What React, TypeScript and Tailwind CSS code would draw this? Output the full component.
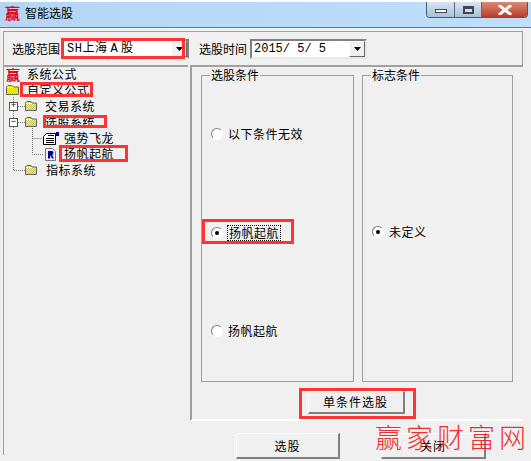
import * as React from "react";

const FONT = "font-['Noto_Sans_CJK_SC','Liberation_Sans',sans-serif]";

function Folder({ wide = false }: { wide?: boolean }) {
  return (
    <svg width={wide ? 13 : 12} height="10" viewBox={wide ? "0 0 13 10" : "0 0 12 10"} className="shrink-0">
      <defs>
        <pattern id="dither" width="2" height="2" patternUnits="userSpaceOnUse">
          <rect width="2" height="2" fill="#ffff00" />
          <rect width="1" height="1" fill="#c8c860" />
          <rect x="1" y="1" width="1" height="1" fill="#c8c860" />
        </pattern>
      </defs>
      <path d={wide ? "M.5 2 L2 .5 H6 L7.5 2 H12.5 V9.5 H.5 Z" : "M.5 2 L2 .5 H6 L7 2 H11.5 V9.5 H.5 Z"} fill="url(#dither)" stroke="#666" />
      <path d="M1 2.5 H7" stroke="#fff" />
    </svg>
  );
}

function DropArrow() {
  return (
    <span className="flex h-[16px] w-[16px] items-center justify-center border-t border-l border-t-white border-l-white border-r border-b border-r-[#666] border-b-[#666] bg-[#f0f0f0]">
      <svg width="7" height="4" viewBox="0 0 7 4">
        <path d="M0 0 H7 L3.5 4 Z" fill="#000" />
      </svg>
    </span>
  );
}

function Radio({ on = false }: { on?: boolean }) {
  return (
    <span className="flex h-[12px] w-[12px] shrink-0 items-center justify-center rounded-full border border-t-[#808080] border-l-[#808080] border-r-white border-b-white bg-white">
      {on && <span className="h-[4px] w-[4px] rounded-full bg-black" />}
    </span>
  );
}

function RaisedButton({ label, className }: { label: string; className: string }) {
  return (
    <button className={`flex items-center justify-center border-t border-l border-t-white border-l-white border-r-2 border-b-2 border-r-[#808080] border-b-[#808080] bg-[#f0f0f0] text-[12px] text-black ${className}`}>
      {label}
    </button>
  );
}

function PlusMinus({ sign }: { sign: string }) {
  return (
    <span className="flex h-[9px] w-[9px] shrink-0 items-center justify-center border border-[#555] bg-white font-['Liberation_Mono',monospace] text-[9px] leading-none">
      {sign}
    </span>
  );
}

function TreeRow({ indent, label, children }: { indent: string; label: string; children: React.ReactNode }) {
  return (
    <div className={`flex h-[16px] items-center ${indent}`}>
      {children}
      <span className="whitespace-nowrap text-[12px] leading-[16px] tracking-[0.5px] text-black">{label}</span>
    </div>
  );
}

function Group({ title, className, children }: { title: string; className: string; children: React.ReactNode }) {
  return (
    <div className={`relative h-[307px] border border-[#a0a0a0] ${className}`}>
      <span className="absolute -top-[9px] left-[8px] bg-[#f0f0f0] px-[1px] text-[12px] leading-[16px] text-black">{title}</span>
      {children}
    </div>
  );
}

export default function App() {
  return (
    <div className={`relative h-[461px] w-[531px] overflow-hidden bg-white ${FONT}`}>
      {/* title bar */}
      <div className="mt-[2px] flex h-[25px] items-start bg-gradient-to-r from-[#b4d6f4] to-[#bfdffb] pl-[5px]">
        <span className="mt-[1px] text-[15px] font-bold leading-[20px] text-[#e8001c]">赢</span>
        <span className="ml-[5px] mt-[3px] text-[12px] leading-[16px] text-black">智能选股</span>
        <div className="ml-auto mr-[3px] flex h-[16px] overflow-hidden rounded-b-[4px] border border-t-0 border-[#4a5a6a]">
          <span className="flex w-[28px] items-center justify-center border-r border-[#5a6a7a] bg-gradient-to-b from-[#d8e6f2] to-[#a8c0d6]">
            <span className="mt-[3px] h-[4px] w-[12px] border border-[#445] bg-white" />
          </span>
          <span className="flex w-[27px] items-center justify-center border-r border-[#5a6a7a] bg-gradient-to-b from-[#d8e6f2] to-[#a8c0d6]">
            <span className="h-[8px] w-[11px] border-2 border-t-[3px] border-[#445] bg-[#cfe0ee]" />
          </span>
          <span className="flex w-[45px] items-center justify-center bg-gradient-to-b from-[#d98a78] to-[#b93a28]">
            <svg width="14" height="10" viewBox="0 0 14 10">
              <path d="M2 1 L12 9 M12 1 L2 9" stroke="#fff" strokeWidth="3" strokeLinecap="square" />
            </svg>
          </span>
        </div>
      </div>

      {/* client area */}
      <div className="h-[434px] border-t border-t-[#6b7784] bg-[#f0f0f0] pl-[3px] pr-[3px]">
        {/* filter row */}
        <div className="mr-[5px] mt-[3px] flex h-[34px] items-center border-t border-r border-l border-[#a0a0a0] pl-[8px] text-[12px] text-black">
          <span className="w-[48px] whitespace-nowrap">选股范围</span>
          <div className="relative ml-[1px] flex h-[20px] w-[128px] items-center border-2 border-t-[#808080] border-l-[#808080] border-r-[#808080] border-b-[#e8e8e8] bg-white pl-[4px] font-['Liberation_Mono','Noto_Sans_CJK_SC',monospace]">
            <span className="flex items-center whitespace-nowrap text-[12px] tracking-[0.5px]">
              SH上海<span className="mx-[3px]">A</span>股
            </span>
            <span className="ml-auto"><DropArrow /></span>
            <span className="absolute -top-[3px] -left-[2px] h-[21px] w-[124px] border-[3px] border-[#ff3333]" />
          </div>
          <span className="ml-[10px] w-[50px] whitespace-nowrap">选股时间</span>
          <div className="ml-[1px] flex h-[20px] w-[117px] items-center border-2 border-t-[#808080] border-l-[#808080] border-r-[#e8e8e8] border-b-[#e8e8e8] bg-white pl-[2px] font-['Liberation_Mono',monospace]">
            <span className="whitespace-pre text-[12px]">2015/ 5/ 5</span>
            <span className="ml-auto"><DropArrow /></span>
          </div>
        </div>

        <div className="flex">
          {/* tree */}
          <div className="relative h-[390px] w-[185px] border-t-2 border-l border-t-[#a0a0a0] border-l-[#a0a0a0]">
            <svg className="absolute left-0 top-0" width="60" height="120" viewBox="0 0 60 120">
              <path d="M9.5 30 V103.5 H21 M14 39.5 H21 M14 55.5 H21 M28.5 61 V87.5 H40 M28.5 71.5 H38" stroke="#777" strokeDasharray="1 1" fill="none" />
            </svg>
            <div className="relative -mt-[1px]">
              <TreeRow indent="pl-[2px]" label="系统公式">
                <span className="w-[21px] text-[14px] font-bold leading-[16px] text-[#e8001c]">赢</span>
              </TreeRow>
              <TreeRow indent="pl-[2px]" label="自定义公式">
                <span className="mr-[8px]"><Folder wide /></span>
              </TreeRow>
              <TreeRow indent="pl-[5px]" label="交易系统">
                <PlusMinus sign="+" />
                <span className="ml-[7px] mr-[8px]"><Folder /></span>
              </TreeRow>
              <TreeRow indent="pl-[5px]" label="选股系统">
                <PlusMinus sign="−" />
                <span className="ml-[7px] mr-[8px]"><Folder /></span>
              </TreeRow>
              <TreeRow indent="pl-[39px]" label="强势飞龙">
                <svg width="16" height="13" viewBox="0 0 16 13" className="mr-[5px] shrink-0">
                  <path d="M3.5 1.5 H12.5 V12.5 H.5 V4.5 Z" fill="#fff" stroke="#000" />
                  <path d="M5 3.5 H11 M3 6.5 H11 M3 8.5 H11 M3 10.5 H11" stroke="#000" />
                  <rect x="13" y="0" width="3" height="4" fill="#00008b" />
                </svg>
              </TreeRow>
              <TreeRow indent="pl-[41px]" label="扬帆起航">
                <svg width="11" height="13" viewBox="0 0 11 13" className="mr-[8px] shrink-0">
                  <path d="M.5 .5 H7.5 L10.5 3.5 V12.5 H.5 Z" fill="#eef2fa" stroke="#777" />
                  <path d="M3 3 H7 Q8.5 3 8.5 5 Q8.5 7 7 7 L9 10.5 H7 L5.2 7 V10.5 H3 Z" fill="#00008b" />
                </svg>
              </TreeRow>
              <TreeRow indent="pl-[21px]" label="指标系统">
                <span className="mr-[9px]"><Folder /></span>
              </TreeRow>
            </div>
            {/* red highlights painted over the tree */}
            <span className="absolute left-[16px] top-[15px] h-[15px] w-[73px] border-[3px] border-[#ff3333]" />
            <span className="absolute left-[39px] top-[48px] h-[13px] w-[64px] border-[3px] border-[#ff3333]" />
            <span className="absolute left-[55px] top-[78px] h-[17px] w-[69px] border-[3px] border-[#ff3333]" />
          </div>

          {/* conditions panel */}
          <div className="ml-[2px] flex h-[356px] w-[333px] flex-col border-t-2 border-l-2 border-b-2 border-t-[#a0a0a0] border-l-[#a0a0a0] border-b-white">
            <div className="ml-[9px] mt-[8px] flex gap-[8px]">
              <Group title="选股条件" className="w-[153px]">
                <div className="flex h-full flex-col pl-[9px] text-[12px] text-black">
                  <div className="mt-[49px] flex items-center gap-[5px] tracking-[0.5px]"><Radio />以下条件无效</div>
                  <div className="relative mt-[82px] flex items-center gap-[4px] tracking-[0.5px]">
                    <Radio on />
                    <span className="border border-dotted border-black px-[1px] leading-[14px]">扬帆起航</span>
                    <span className="absolute -left-[9px] -top-[6px] h-[25px] w-[92px] border-[3px] border-[#ff3333]" />
                  </div>
                  <div className="mt-[81px] flex items-center gap-[5px] tracking-[0.5px]"><Radio />扬帆起航</div>
                </div>
              </Group>
              <Group title="标志条件" className="w-[151px]">
                <div className="mt-[147px] flex items-center gap-[5px] pl-[9px] text-[12px] tracking-[0.5px] text-black"><Radio on />未定义</div>
              </Group>
            </div>
            <div className="relative mt-[9px] flex justify-center pr-[3px]">
              <RaisedButton label="单条件选股" className="h-[23px] w-[97px] tracking-[1px]" />
              <span className="absolute left-[107px] -top-[3px] h-[31px] w-[117px] border-[3px] border-[#ff3333]" />
            </div>
          </div>
        </div>
      </div>

      {/* bottom buttons */}
      <div className="absolute left-[236px] top-[433px] flex gap-[41px]">
        <RaisedButton label="选股" className="h-[26px] w-[104px] tracking-[1px]" />
        <RaisedButton label="关闭" className="h-[26px] w-[105px] tracking-[1px]" />
      </div>

      {/* watermark */}
      <div className="absolute left-[375px] top-[417px] whitespace-nowrap text-[27px] font-light leading-[40px] tracking-[4px] text-[#f01818] opacity-90">赢家财富网</div>
    </div>
  );
}
